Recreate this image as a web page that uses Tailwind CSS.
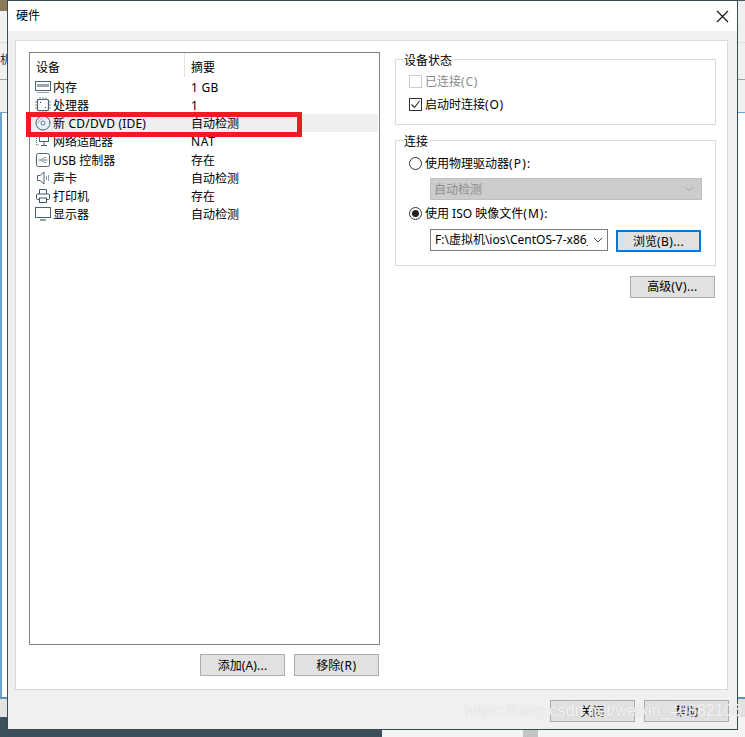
<!DOCTYPE html>
<html lang="zh">
<head>
    <meta charset="UTF-8">
    <title>硬件</title>
    <script src="https://cdn.jsdelivr.net/npm/@tailwindcss/browser@4"></script>
</head>
<body class="relative w-[745px] h-[737px] overflow-hidden bg-[#f0f0f0] text-[12px] leading-[18px] text-black font-['Noto_Sans','Noto_Sans_CJK_SC',sans-serif]">

    <!-- window behind the dialog -->
    <div class="absolute inset-x-0 top-0 h-px bg-[#4a5a60]"></div>
    <div class="absolute left-0 top-0 w-[8px] h-[11px] bg-[#8a7a5a]"></div>
    <div class="absolute inset-x-0 top-[42px] h-px bg-[#dcdcdc]"></div>
    <div class="absolute left-0 top-[51px] text-[#333]">机</div>
    <div class="absolute inset-x-0 top-[79px] h-px bg-[#a0a0a0]"></div>
    <div class="absolute inset-x-0 top-[112px] h-[585px] bg-white border-t border-l-2 border-[#6ba4cc]"></div>
    <div class="absolute inset-x-0 top-[697px] h-[20px] bg-[#e2e2e2] border-t-2 border-[#5f93b0]"></div>
    <div class="absolute left-0 top-[717px] w-[382px] h-[20px] bg-[#3c505c]"></div>
    <div class="absolute left-[382px] top-[717px] right-0 h-[20px] bg-[#f4f4f4]"></div>
    <div class="absolute left-[523px] top-[729px] w-[15px] h-[8px] bg-[#c4c4c4]"></div>

    <!-- dialog -->
    <div class="absolute left-[8px] top-px w-[729px] h-[728px] bg-[#f0f0f0] flex flex-col shadow-[0_0_0_1px_#3a4a52]">
        <div class="h-[30px] bg-white flex items-center justify-between pl-[8px] pr-[8px] shrink-0">
            <div>硬件</div>
            <svg class="w-[13px] h-[13px]" viewBox="0 0 13 13" fill="none" stroke="#111" stroke-width="1.1"><path d="M1 1l11 11M12 1L1 12"/></svg>
        </div>

        <div class="mt-[9px] ml-[7px] w-[713px] h-[650px] bg-white border border-[#d9d9d9] flex pl-[13px] pt-[11px] shrink-0">
            <!-- device list -->
            <div class="w-[351px] flex flex-col shrink-0">
                <div class="h-[593px] border border-[#82828c] bg-white relative">
                    <div class="flex h-[25px]">
                        <div class="w-[155px] pl-[6px] mb-px border-r border-[#e4e4e4] flex items-center"><span class="pt-[5px]">设备</span></div>
                        <div class="pl-[6px] flex items-center"><span class="pt-[5px]">摘要</span></div>
                    </div>
                    <div class="flex flex-col [&_span]:pt-[2px]">
                        <div class="flex h-[18.14px] items-center">
                            <div class="w-[161px] flex items-center pl-[5px] gap-[2px]">
                                <svg class="w-[16px] h-[16px]" viewBox="0 0 16 16" fill="none" stroke="#4a6472"><rect x="0.5" y="2.5" width="15" height="9"/><rect x="2" y="5" width="12" height="3" fill="#9aa8b0" stroke="none"/><path d="M2 13.500h12" stroke="#8ea0aa"/></svg>
                                <span>内存</span>
                            </div>
                            <span class="tracking-[0.3px]">1 GB</span>
                        </div>
                        <div class="flex h-[18.14px] items-center">
                            <div class="w-[161px] flex items-center pl-[5px] gap-[2px]">
                                <svg class="w-[16px] h-[16px]" viewBox="0 0 16 16" fill="none" stroke="#4a6472"><rect x="2.500" y="2.500" width="11" height="11" rx="1" stroke-width="1.200"/><path d="M5 0v2M8 0v2M11 0v2M5 14v2M8 14v2M11 14v2M0 5h2M0 8h2M0 11h2M14 5h2M14 8h2M14 11h2" stroke="#7d929e"/><path d="M5 5.500h1M10 10.500h1" stroke="#333"/></svg>
                                <span>处理器</span>
                            </div>
                            <span>1</span>
                        </div>
                        <div class="flex h-[18.14px] items-center bg-[#efefef] mx-px">
                            <div class="w-[160px] flex items-center pl-[4px] gap-[2px]">
                                <svg class="w-[16px] h-[16px]" viewBox="0 0 16 16" fill="none" stroke="#3f6379"><circle cx="8" cy="8" r="7" fill="#e6f0f6"/><circle cx="8" cy="8" r="2" fill="#f4f8fa" stroke="#5a7f96"/><path d="M3.500 8a4.500 4.500 0 0 1 4.500-4.500" stroke="#9dbccd"/></svg>
                                <span class="tracking-[0.2px]">新 CD/DVD (IDE)</span>
                            </div>
                            <span>自动检测</span>
                        </div>
                        <div class="flex h-[18.14px] items-center">
                            <div class="w-[161px] flex items-center pl-[5px] gap-[2px]">
                                <svg class="w-[16px] h-[16px]" viewBox="0 0 16 16" fill="none" stroke="#4a6472"><rect x="4.500" y="1.500" width="9" height="7"/><path d="M9 9v3M6 12.500h6"/><path d="M1.500 3v9h2" stroke-dasharray="1 1"/></svg>
                                <span>网络适配器</span>
                            </div>
                            <span class="tracking-[0.6px]">NAT</span>
                        </div>
                        <div class="flex h-[18.14px] items-center">
                            <div class="w-[161px] flex items-center pl-[5px] gap-[2px]">
                                <svg class="w-[16px] h-[16px]" viewBox="0 0 16 16" fill="none" stroke="#4a6472"><rect x="1.500" y="1.500" width="13" height="13" rx="2"/><path d="M3.500 8h9M6.500 8l2.500-2.500h2M6.500 8l2.500 2.500h2" stroke="#6d8592"/></svg>
                                <span>USB 控制器</span>
                            </div>
                            <span>存在</span>
                        </div>
                        <div class="flex h-[18.14px] items-center">
                            <div class="w-[161px] flex items-center pl-[5px] gap-[2px]">
                                <svg class="w-[16px] h-[16px]" viewBox="0 0 16 16" fill="none" stroke="#4a6472"><path d="M2.500 5.500h2.500l4-3.500v12l-4-3.500h-2.500z"/><path d="M11.500 6v4M13.500 5v6" stroke="#8ea0aa"/></svg>
                                <span>声卡</span>
                            </div>
                            <span>自动检测</span>
                        </div>
                        <div class="flex h-[18.14px] items-center">
                            <div class="w-[161px] flex items-center pl-[5px] gap-[2px]">
                                <svg class="w-[16px] h-[16px]" viewBox="0 0 16 16" fill="none" stroke="#3f5866"><path d="M4.500 6V1.500h7V6"/><rect x="1.500" y="6" width="13" height="5.500" rx="1"/><rect x="4.500" y="10" width="7" height="4.500" fill="#fff"/></svg>
                                <span>打印机</span>
                            </div>
                            <span>存在</span>
                        </div>
                        <div class="flex h-[18.14px] items-center">
                            <div class="w-[161px] flex items-center pl-[5px] gap-[2px]">
                                <svg class="w-[16px] h-[16px]" viewBox="0 0 16 16" fill="none" stroke="#4a6472"><rect x="0.500" y="1.500" width="15" height="10"/><path d="M5 14h6" stroke="#8ea0aa" stroke-width="2"/></svg>
                                <span>显示器</span>
                            </div>
                            <span>自动检测</span>
                        </div>
                    </div>
                </div>
                <div class="flex justify-end gap-[9px] mt-[9px] mr-px">
                    <button class="w-[85px] h-[22px] pt-[2px] bg-[#e1e1e1] border border-[#adadad]">添加<span class="tracking-[0.2px]">(A)...</span></button>
                    <button class="w-[85px] h-[22px] pt-[2px] bg-[#e1e1e1] border border-[#adadad]">移除<span class="tracking-[0.6px]">(R)</span></button>
                </div>
            </div>

            <!-- right column -->
            <div class="ml-[15px] w-[321px] flex flex-col pt-[7px] shrink-0">
                <div class="relative h-[66px] border border-[#d9d9d9] pt-[10px] pl-[13px]">
                    <span class="absolute left-[7px] -top-[8px] bg-white px-px">设备状态</span>
                    <div class="flex items-center h-[23px] gap-[3px] text-[#8c8c8c]">
                        <div class="w-[13px] h-[13px] border border-[#cccccc] bg-white"></div>
                        <span>已连接<span class="tracking-[0.8px]">(C)</span></span>
                    </div>
                    <div class="flex items-center h-[23px] gap-[3px]">
                        <div class="w-[13px] h-[13px] border border-[#333] bg-white flex items-center justify-center">
                            <svg class="w-[11px] h-[11px]" viewBox="0 0 11 11" fill="none" stroke="#222" stroke-width="1.100"><path d="M1.500 5.500l3 3 5-6.500"/></svg>
                        </div>
                        <span>启动时连接<span class="tracking-[0.8px]">(O)</span></span>
                    </div>
                </div>

                <div class="relative h-[126px] mt-[15px] border border-[#d9d9d9] pt-[11px] pl-[13px]">
                    <span class="absolute left-[7px] -top-[8px] bg-white px-px">连接</span>
                    <div class="flex items-center h-[22px] gap-[3px]">
                        <div class="w-[13px] h-[13px] rounded-full border border-[#333] bg-white"></div>
                        <span class="pt-[2px]">使用物理驱动器<span class="tracking-[1.2px]">(P):</span></span>
                    </div>
                    <div class="ml-[21px] mt-[4px] w-[272px] h-[22px] bg-[#cccccc] border border-[#bfbfbf] flex items-center justify-between pl-[3px] pr-[7px] text-[#8c8c8c]">
                        <span class="pt-[2px]">自动检测</span>
                        <svg class="w-[10px] h-[6px]" viewBox="0 0 10 6" fill="none" stroke="#a8a8a8"><path d="M1 1l4 4 4-4"/></svg>
                    </div>
                    <div class="flex items-center h-[22px] gap-[3px] mt-[2px]">
                        <div class="w-[13px] h-[13px] rounded-full border border-[#333] bg-white flex items-center justify-center">
                            <div class="w-[7px] h-[7px] rounded-full bg-[#222]"></div>
                        </div>
                        <span class="pt-[2px]">使用 ISO 映像文件<span class="tracking-[1px]">(M):</span></span>
                    </div>
                    <div class="flex ml-[21px] mt-[5px] gap-[8px] items-start">
                        <div class="w-[178px] h-[22px] bg-white border border-[#7a7a7a] flex items-center pl-[4px] pr-[2px] justify-between">
                            <span class="w-[153px] overflow-hidden whitespace-nowrap">F:\虚拟机\ios\CentOS-7-x86_64</span>
                            <svg class="w-[10px] h-[6px] mr-[2px]" viewBox="0 0 10 6" fill="none" stroke="#444"><path d="M1 1l4 4 4-4"/></svg>
                        </div>
                        <button class="mt-px w-[85px] h-[22px] pt-px bg-[#e1e1e1] border-2 border-[#0078d7]">浏览<span class="tracking-[0.4px]">(B)...</span></button>
                    </div>
                </div>

                <button class="self-end mr-px mt-[10px] w-[85px] h-[22px] bg-[#e1e1e1] border border-[#adadad]">高级<span class="tracking-[0.4px]">(V)...</span></button>
            </div>
        </div>

        <div class="flex justify-end gap-[9px] mt-[10px] mr-[8px]">
            <button class="w-[85px] h-[22px] pt-[2px] bg-[#e1e1e1] border border-[#adadad]">关闭</button>
            <button class="w-[85px] h-[22px] pt-[2px] bg-[#e1e1e1] border border-[#adadad]">帮助</button>
        </div>
    </div>

    <!-- red annotation -->
    <div class="absolute left-[26px] top-[112px] w-[276px] h-[25px] border-[5px] border-[#ed1c24]"></div>

    <!-- watermark -->
    <div class="absolute left-[465px] top-[700px] text-[16.3px] leading-[20px] text-white/80 font-['Liberation_Sans',sans-serif] [text-shadow:0_0_1px_#bbb]">https://blog.csdn.net/weixin_46882106</div>

</body>
</html>
